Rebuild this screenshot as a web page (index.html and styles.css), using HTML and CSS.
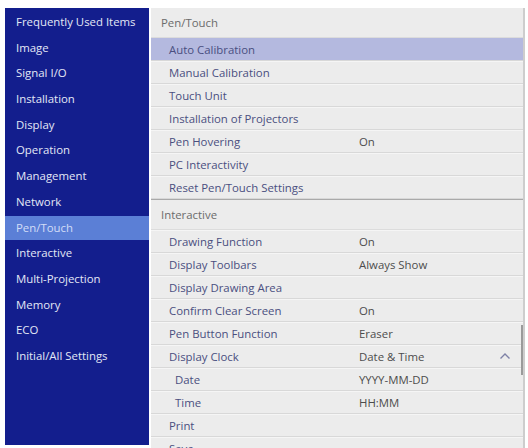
FILE: index.html
```html
<!DOCTYPE html>
<html lang="en">
<head>
    <meta charset="UTF-8">
    <meta name="viewport" content="width=device-width, initial-scale=1.0">
    <title>Pen/Touch</title>
    <link rel="stylesheet" href="styles.css">
</head>
<body>

<div class="menu">
    <!-- Top level menu -->
    <nav class="sidebar">
        <div class="side-item">Frequently Used Items</div>
        <div class="side-item">Image</div>
        <div class="side-item">Signal I/O</div>
        <div class="side-item">Installation</div>
        <div class="side-item">Display</div>
        <div class="side-item">Operation</div>
        <div class="side-item">Management</div>
        <div class="side-item">Network</div>
        <div class="side-item active">Pen/Touch</div>
        <div class="side-item">Interactive</div>
        <div class="side-item">Multi-Projection</div>
        <div class="side-item">Memory</div>
        <div class="side-item">ECO</div>
        <div class="side-item">Initial/All Settings</div>
    </nav>

    <!-- Settings list -->
    <div class="panel">
        <div class="section-title">Pen/Touch</div>
        <div class="row selected"><span class="label">Auto Calibration</span></div>
        <div class="row"><span class="label">Manual Calibration</span></div>
        <div class="row"><span class="label">Touch Unit</span></div>
        <div class="row"><span class="label">Installation of Projectors</span></div>
        <div class="row"><span class="label">Pen Hovering</span><span class="value">On</span></div>
        <div class="row"><span class="label">PC Interactivity</span></div>
        <div class="row"><span class="label">Reset Pen/Touch Settings</span></div>

        <div class="section-title sep">Interactive</div>
        <div class="row"><span class="label">Drawing Function</span><span class="value">On</span></div>
        <div class="row"><span class="label">Display Toolbars</span><span class="value">Always Show</span></div>
        <div class="row"><span class="label">Display Drawing Area</span></div>
        <div class="row"><span class="label">Confirm Clear Screen</span><span class="value">On</span></div>
        <div class="row"><span class="label">Pen Button Function</span><span class="value">Eraser</span></div>
        <div class="row">
            <span class="label">Display Clock</span><span class="value">Date &amp; Time</span>
            <svg class="chevron" width="12" height="8" viewBox="0 0 12 8">
                <polyline points="1.5,6.5 6,2 10.5,6.5" fill="none" stroke="#7d81a6" stroke-width="1.4"/>
            </svg>
        </div>
        <div class="row sub"><span class="label">Date</span><span class="value">YYYY-MM-DD</span></div>
        <div class="row sub"><span class="label">Time</span><span class="value">HH:MM</span></div>
        <div class="row"><span class="label">Print</span></div>
        <div class="row"><span class="label">Save</span></div>

        <div class="scroll-thumb"></div>
    </div>
</div>

</body>
</html>
```

FILE: styles.css
```css
body {
    font-family: "Open Sans", "Noto Sans", sans-serif;
    font-size: 11.4px;
    background-color: #fff;
    margin: 0;
    padding: 0;
    overflow: hidden;
}
.menu {
    display: flex;
    align-items: flex-start;
    gap: 2px;
    height: 448px;
    padding: 8px 3px 0 5px;
    box-sizing: border-box;
}
.sidebar {
    width: 144px;
    height: 437px;
    flex-shrink: 0;
    background-color: #131e8d;
    padding-top: 2px;
    box-sizing: border-box;
}
.side-item {
    height: 24px;
    line-height: 24px;
    margin-bottom: 1.7px;
    padding-left: 11px;
    color: #e3e8f6;
    white-space: nowrap;
}
.side-item.active {
    background-color: #5b7fd6;
    color: #d2ddf6;
}
.panel {
    position: relative;
    flex: 1;
    height: 440px;
    overflow: hidden;
    background-color: #ececec;
    border-right: 2px solid #cdcdcd;
}
.section-title {
    height: 30px;
    line-height: 30px;
    padding-left: 10px;
    color: #6b6b6b;
    border-bottom: 1px solid #dcdcdc;
    box-sizing: border-box;
}
.section-title.sep {
    height: 31px;
    border-top: 1px solid #a9a9a9;
}
.row {
    display: flex;
    align-items: center;
    height: 23px;
    padding-left: 18px;
    border-bottom: 1px solid #d8d8d8;
    box-shadow: inset 0 1px 0 #f5f5f5;
    box-sizing: border-box;
}
.row.selected {
    background-color: #b4b9df;
    box-shadow: none;
}
.row .label {
    width: 190px;
    flex-shrink: 0;
    color: #4a4f7f;
    white-space: nowrap;
}
.row.sub .label {
    width: 184px;
    margin-left: 6px;
}
.row .value {
    flex: 1;
    color: #4c4c4c;
}
.chevron {
    margin-right: 12px;
}
.scroll-thumb {
    position: absolute;
    right: 0;
    top: 317px;
    width: 2px;
    height: 50px;
    background-color: #9a9a9a;
}
```
